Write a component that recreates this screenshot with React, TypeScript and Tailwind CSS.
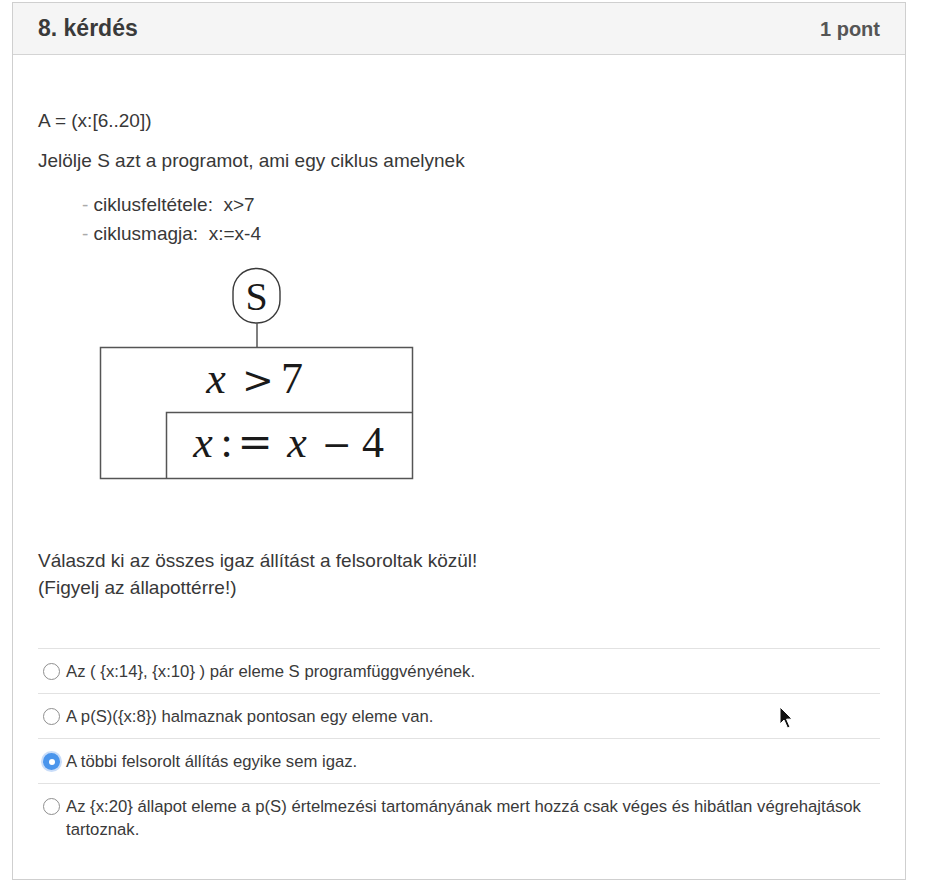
import React from "react"

const options = [
  { text: "Az ( {x:14}, {x:10} ) pár eleme S programfüggvényének.", checked: false },
  { text: "A p(S)({x:8}) halmaznak pontosan egy eleme van.", checked: false },
  { text: "A többi felsorolt állítás egyike sem igaz.", checked: true },
  {
    text: "Az {x:20} állapot eleme a p(S) értelmezési tartományának mert hozzá csak véges és hibátlan végrehajtások tartoznak.",
    checked: false,
  },
]

function Radio({ checked }: { checked: boolean }) {
  if (checked) {
    return (
      <span className="mt-[3px] flex h-[17px] w-[17px] shrink-0 items-center justify-center rounded-full bg-[#4a95ec] shadow-[0_0_0_2px_rgba(120,170,240,0.4)]">
        <span className="h-[6px] w-[6px] rounded-full bg-white" />
      </span>
    )
  }
  return <span className="mt-[3px] h-[17px] w-[17px] shrink-0 rounded-full border border-[#8f8f8f] bg-white" />
}

const serif = "'Liberation Serif', serif"

function Diagram() {
  // struktogram: S -> ciklus (x > 7), mag (x := x - 4)
  return (
    <svg width="330" height="217" viewBox="90 265 330 217" className="ml-[52px] mt-[18px] block">
      <rect x="233" y="268.5" width="47" height="54.5" rx="23" fill="white" stroke="#3a3a3a" strokeWidth="1.4" />
      <text x="256.5" y="310" textAnchor="middle" fontFamily={serif} fontSize="40" fill="#1a1a1a">
        S
      </text>
      <line x1="257" y1="323" x2="257" y2="347" stroke="#555" strokeWidth="1.5" />
      <rect x="100.5" y="347.5" width="312" height="131" fill="white" stroke="#555" strokeWidth="1.5" />
      <polyline points="166.5,478.5 166.5,412.5 412.5,412.5" fill="none" stroke="#555" strokeWidth="1.5" />
      <g fontFamily={serif} fontSize="44" fill="#1a1a1a" textAnchor="middle">
        <text x="216" y="393" fontStyle="italic">x</text>
        <text x="258" y="393" fontFamily="'DejaVu Serif', serif" fontSize="38">&gt;</text>
        <text x="292" y="393">7</text>
        <text x="203" y="457" fontStyle="italic">x</text>
        <text x="226.5" y="457">:</text>
        <text x="255" y="457" fontFamily="'DejaVu Serif', serif" fontSize="42">=</text>
        <text x="297" y="457" fontStyle="italic">x</text>
        <text x="336.5" y="457" fontFamily="'DejaVu Serif', serif" fontSize="36">−</text>
        <text x="373" y="457">4</text>
      </g>
    </svg>
  )
}

export default function App() {
  return (
    <div className="relative min-h-[890px] bg-white pt-[2px] font-['Liberation_Sans',Arial,sans-serif] text-[#383838]">
      <div className="ml-[12px] mr-[22px] border border-[#cfcfcf]">
        <div className="flex h-[52px] items-center justify-between border-b border-[#d4d4d4] bg-[#f5f5f5] px-[25px]">
          <h2 className="text-[23px] font-bold text-[#3a3a3a]">8. kérdés</h2>
          <span className="text-[20px] font-bold text-[#555]">1 pont</span>
        </div>
        <div className="px-[25px] pb-[28px] pt-[52px] text-[19px] leading-[27px]">
          <p>A = (x:[6..20])</p>
          <p className="mt-[13px]">Jelölje S azt a programot, ami egy ciklus amelynek</p>
          <ul className="ml-[44px] mt-[17px]">
            <li>
              <span className="text-[#aaa]">-</span> ciklusfeltétele:&nbsp; x&gt;7
            </li>
            <li className="mt-[2px]">
              <span className="text-[#aaa]">-</span> ciklusmagja:&nbsp; x:=x-4
            </li>
          </ul>
          <Diagram />
          <div className="mt-[65px]">
            <p>Válaszd ki az összes igaz állítást a felsoroltak közül!</p>
            <p>(Figyelj az állapottérre!)</p>
          </div>
          <div className="mt-[47px]">
            {options.map((o, i) => (
              <label
                key={i}
                className="flex gap-[6px] border-t border-[#e2e2e2] pb-[10px] pl-[5px] pt-[11px] text-[16.7px] leading-[23px] text-[#3a3a3a]"
              >
                <Radio checked={o.checked} />
                <span>{o.text}</span>
              </label>
            ))}
          </div>
        </div>
      </div>
      <svg className="absolute left-[779px] top-[706px]" width="16" height="24" viewBox="0 0 16 24">
        <path d="M1 1 L1 18 L5 14 L8.5 22 L11 21 L7.6 13.2 L13 13 Z" fill="#111" stroke="white" strokeWidth="1" />
      </svg>
    </div>
  )
}
